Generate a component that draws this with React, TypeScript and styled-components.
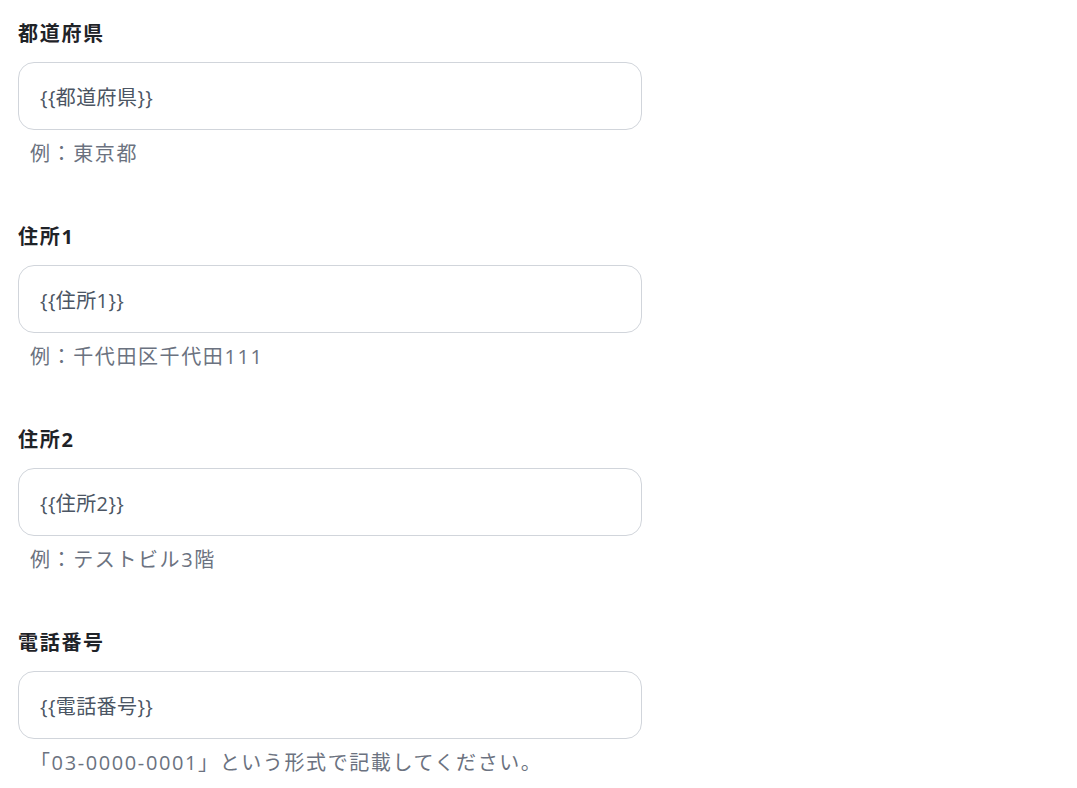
import React from "react";
import styled, { createGlobalStyle } from "styled-components";

const Global = createGlobalStyle`
  html, body { margin: 0; padding: 0; background: #ffffff; }
  body { font-family: "Open Sans", "Noto Sans CJK JP", sans-serif; }
`;

const Form = styled.div`
  display: flex;
  flex-direction: column;
  gap: 53px;
  padding: 19px 18px;
  width: 624px;
`;

const Field = styled.div`
  display: flex;
  flex-direction: column;
`;

const Label = styled.label`
  font-size: 20px;
  line-height: 30px;
  font-weight: 700;
  letter-spacing: 1.7px;
  color: #1f2328;
  margin-bottom: 13px;
`;

const Input = styled.input`
  box-sizing: border-box;
  width: 624px;
  height: 68px;
  border: 1px solid #d1d5db;
  border-radius: 16px;
  padding: 0 21px;
  font-family: "Open Sans", "Noto Sans CJK JP", sans-serif;
  font-size: 20px;
  letter-spacing: 0.4px;
  color: #4b5563;
  background: #ffffff;
  outline: none;
`;

const Hint = styled.div`
  font-size: 20px;
  line-height: 30px;
  letter-spacing: 1.6px;
  color: #6b7280;
  margin-top: 9px;
  padding-left: 12px;
`;

const fields = [
  { label: "都道府県", value: "{{都道府県}}", hint: "例：東京都" },
  { label: "住所1", value: "{{住所1}}", hint: "例：千代田区千代田111" },
  { label: "住所2", value: "{{住所2}}", hint: "例：テストビル3階" },
  { label: "電話番号", value: "{{電話番号}}", hint: "「03-0000-0001」という形式で記載してください。" },
];

export default function App() {
  return (
    <>
      <Global />
      <Form>
        {fields.map((f) => (
          <Field key={f.label}>
            <Label>{f.label}</Label>
            <Input defaultValue={f.value} readOnly />
            <Hint>{f.hint}</Hint>
          </Field>
        ))}
      </Form>
    </>
  );
}
